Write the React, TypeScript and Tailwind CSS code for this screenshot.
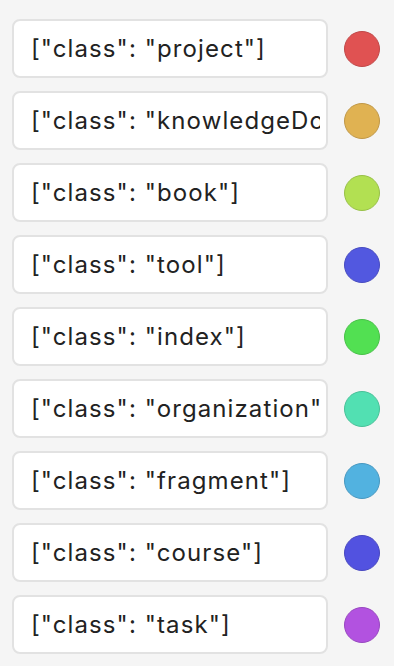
import React from "react";

const items = [
  { name: "project", color: "bg-[#e05252] border-[#c04848]" },
  { name: "knowledgeDomain", color: "bg-[#e0b252] border-[#c09848]" },
  { name: "book", color: "bg-[#b2e052] border-[#98c048]" },
  { name: "tool", color: "bg-[#5258e0] border-[#484cc0]" },
  { name: "index", color: "bg-[#52e052] border-[#48c048]" },
  { name: "organization", color: "bg-[#52e0b2] border-[#48c098]" },
  { name: "fragment", color: "bg-[#52b2e0] border-[#4898c0]" },
  { name: "course", color: "bg-[#5252e0] border-[#4848c0]" },
  { name: "task", color: "bg-[#b252e0] border-[#9848c0]" },
];

export default function App() {
  return (
    <div className="w-[394px] h-[666px] bg-[#f5f5f5] pt-[19px] pl-3 pr-[14px] flex flex-col gap-[13px] font-['Inter',sans-serif]">
      {items.map(item => (
        <div key={item.name} className="flex items-center gap-4">
          <input
            readOnly
            value={`["class": "${item.name}"]`}
            className="w-[316px] h-[59px] bg-white border-2 border-[#e2e2e2] rounded-lg pl-[17px] pr-[6px] text-[24px] tracking-[1.1px] text-[#222] outline-none"
          />
          <div className={`w-9 h-9 rounded-full border ${item.color}`} />
        </div>
      ))}
    </div>
  );
}
